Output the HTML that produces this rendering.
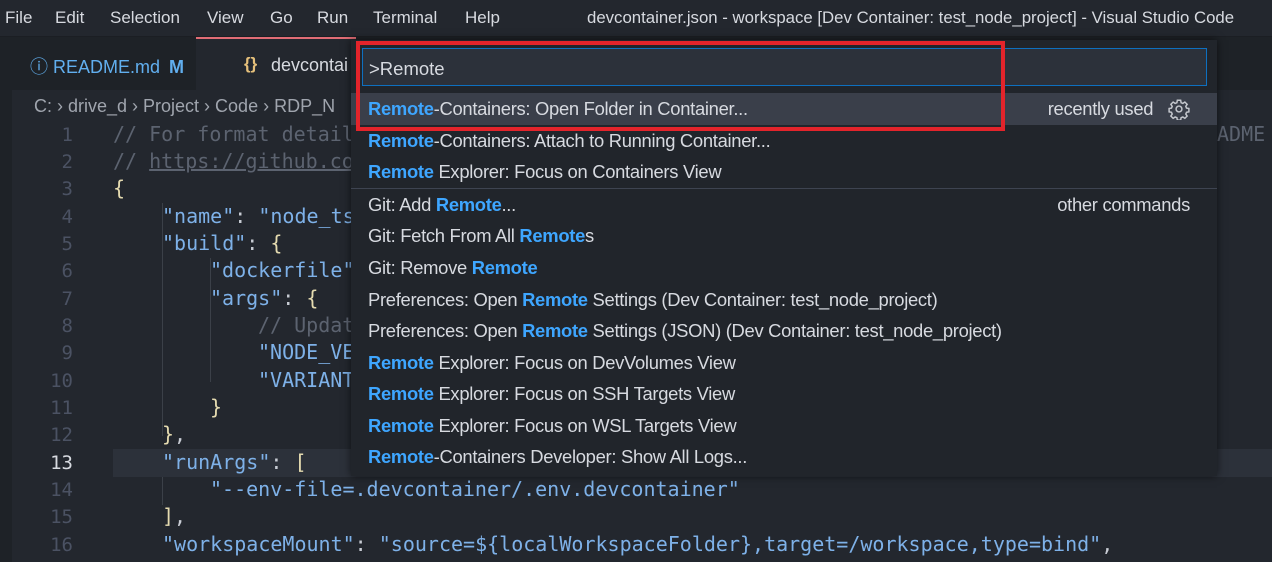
<!DOCTYPE html>
<html><head><meta charset="utf-8"><style>
*{margin:0;padding:0;box-sizing:border-box}
body{width:1272px;height:562px;overflow:hidden;background:#23272e;font-family:"Liberation Sans",sans-serif;color:#d7dae0;position:relative}
.abs{position:absolute;white-space:pre}
#menu{position:absolute;left:0;top:0;width:1272px;height:37px;background:#23272e;border-bottom:1px solid #1b1e23}
#menu span{position:absolute;top:8px;font-size:17px;color:#d7dae0}
#tabs{position:absolute;left:0;top:37px;width:1272px;height:53px;background:#1e2227}
.tab1{position:absolute;left:10px;top:37px;width:186px;height:53px;background:#1e2227}
.tab2{position:absolute;left:196px;top:37px;width:160px;height:53px;background:#23272e;border-top:2px solid #e06c75}
#gutter{position:absolute;left:0;top:90px;width:12px;height:472px;background:#1e2227}
.code{position:absolute;left:0;font-family:"DejaVu Sans Mono",monospace;font-size:20px;white-space:pre;color:#abb2bf}
.ln{position:absolute;width:73px;text-align:right;font-family:"DejaVu Sans Mono",monospace;font-size:19px;color:#4b5263}
.k{color:#7eb1e8}.p{color:#c8ccd4}.b{color:#e5dbb0}.c{color:#5c6370}
#hl13{position:absolute;left:113px;top:449px;width:1159px;height:28px;background:#2c313a}
#pal{position:absolute;left:351px;top:40px;width:866px;height:436px;background:#21252b;box-shadow:0 0 8px rgba(0,0,0,.6)}
#inp{position:absolute;left:11px;top:8px;width:845px;height:38px;background:#2c313a;border:1px solid #0e70c0;font-size:18.5px;padding:9px 0 0 6px;color:#d7dae0}
.row{position:absolute;left:0;width:866px;height:31.7px;font-size:18.4px;padding:5px 0 0 17px;color:#d7dae0;white-space:pre;letter-spacing:-0.3px}
.row b{color:#3ea6ff}
.sel{background:#3a3f4a}
.rt{position:absolute;right:27px;top:5px;color:#d7dae0}
#red{position:absolute;left:356px;top:41px;width:649px;height:90px;border:4px solid #e3242b}
.ind{position:absolute;width:1px;background:#3b4048}
</style></head><body>
<div id="menu">
<span style="left:5px">File</span><span style="left:55px">Edit</span><span style="left:110px">Selection</span><span style="left:207px">View</span><span style="left:270px">Go</span><span style="left:317px">Run</span><span style="left:373px">Terminal</span><span style="left:465px">Help</span>
<span style="left:587px;font-size:16.8px">devcontainer.json - workspace [Dev Container: test_node_project] - Visual Studio Code</span>
</div>
<div id="tabs"></div>
<div class="tab1"><span class="abs" style="left:20px;top:16px;font-size:18px;color:#61afef">ⓘ README.md <b style="margin-left:4px">M</b></span></div>
<div class="tab2"><span class="abs" style="left:48px;top:15px;font-size:17px;color:#e5c07b;font-weight:bold">{}</span><span class="abs" style="left:75px;top:16px;font-size:18px;color:#d7dae0">devcontai</span></div>
<div id="gutter"></div>
<div class="abs" style="left:34px;top:96px;font-size:18px;color:#a0a5ae">C: › drive_d › Project › Code › RDP_N</div>
<div id="hl13"></div>
<div class="ind" style="left:162px;top:203px;height:233px"></div>
<div class="ind" style="left:210px;top:258px;height:124px"></div>
<div class="ind" style="left:162px;top:477px;height:28px"></div>
<div class="ln" style="top:124px">1</div><div class="ln" style="top:151px">2</div><div class="ln" style="top:178px">3</div><div class="ln" style="top:206px">4</div><div class="ln" style="top:233px">5</div><div class="ln" style="top:260px">6</div><div class="ln" style="top:288px">7</div><div class="ln" style="top:315px">8</div><div class="ln" style="top:342px">9</div><div class="ln" style="top:370px">10</div><div class="ln" style="top:397px">11</div><div class="ln" style="top:424px">12</div><div class="ln" style="top:452px;color:#d7dae0">13</div><div class="ln" style="top:479px">14</div><div class="ln" style="top:506px">15</div><div class="ln" style="top:534px">16</div>
<div class="code" style="left:113px;top:122px"><span class="c">// For format detail</span></div>
<div class="code" style="left:113px;top:149px"><span class="c">// <u>https://github.co</u></span></div>
<div class="code" style="left:113px;top:176px"><span class="b">{</span></div>
<div class="code" style="left:162px;top:204px"><span class="k">"name"</span><span class="p">: </span><span class="k">"node_ts</span></div>
<div class="code" style="left:162px;top:231px"><span class="k">"build"</span><span class="p">: </span><span class="b">{</span></div>
<div class="code" style="left:210px;top:258px"><span class="k">"dockerfile"</span></div>
<div class="code" style="left:210px;top:286px"><span class="k">"args"</span><span class="p">: </span><span class="b">{</span></div>
<div class="code" style="left:258px;top:313px"><span class="c">// Updat</span></div>
<div class="code" style="left:258px;top:340px"><span class="k">"NODE_VE</span></div>
<div class="code" style="left:258px;top:368px"><span class="k">"VARIANT</span></div>
<div class="code" style="left:210px;top:395px"><span class="b">}</span></div>
<div class="code" style="left:162px;top:422px"><span class="b">}</span><span class="p">,</span></div>
<div class="code" style="left:162px;top:450px"><span class="k">"runArgs"</span><span class="p">: </span><span class="b">[</span></div>
<div class="code" style="left:210px;top:477px"><span class="k">"--env-file=.devcontainer/.env.devcontainer"</span></div>
<div class="code" style="left:162px;top:504px"><span class="b">]</span><span class="p">,</span></div>
<div class="code" style="left:162px;top:532px"><span class="k">"workspaceMount"</span><span class="p">: </span><span class="k">"source=${localWorkspaceFolder},target=/workspace,type=bind"</span><span class="p">,</span></div>
<div class="code" style="left:1217px;top:122px"><span class="c">ADME</span></div>
<div id="pal">
<div id="inp">&gt;Remote</div>
<div class="row sel" style="top:53px"><b>Remote</b>-Containers: Open Folder in Container...<span class="rt">recently used <svg width="22" height="22" viewBox="0 0 24 24" style="vertical-align:-5px;margin-left:10px" fill="none" stroke="#c5c8ce" stroke-width="1.6"><path d="M10.2 2.5h3.6l.5 2.6 1.9.8 2.2-1.5 2.5 2.5-1.5 2.2.8 1.9 2.6.5v3.6l-2.6.5-.8 1.9 1.5 2.2-2.5 2.5-2.2-1.5-1.9.8-.5 2.6h-3.6l-.5-2.6-1.9-.8-2.2 1.5-2.5-2.5 1.5-2.2-.8-1.9-2.6-.5v-3.6l2.6-.5.8-1.9-1.5-2.2 2.5-2.5 2.2 1.5 1.9-.8z"/><circle cx="12" cy="12" r="3.2"/></svg></span></div>
<div class="row" style="top:85px"><b>Remote</b>-Containers: Attach to Running Container...</div>
<div class="row" style="top:116px"><b>Remote</b> Explorer: Focus on Containers View</div>
<div style="position:absolute;left:0;top:148px;width:866px;height:1px;background:#3e4451"></div>
<div class="row" style="top:149px">Git: Add <b>Remote</b>...<span class="rt">other commands</span></div>
<div class="row" style="top:180px">Git: Fetch From All <b>Remote</b>s</div>
<div class="row" style="top:212px">Git: Remove <b>Remote</b></div>
<div class="row" style="top:244px">Preferences: Open <b>Remote</b> Settings (Dev Container: test_node_project)</div>
<div class="row" style="top:275px">Preferences: Open <b>Remote</b> Settings (JSON) (Dev Container: test_node_project)</div>
<div class="row" style="top:307px"><b>Remote</b> Explorer: Focus on DevVolumes View</div>
<div class="row" style="top:338px"><b>Remote</b> Explorer: Focus on SSH Targets View</div>
<div class="row" style="top:370px"><b>Remote</b> Explorer: Focus on WSL Targets View</div>
<div class="row" style="top:401px"><b>Remote</b>-Containers Developer: Show All Logs...</div>
</div>
<div id="red"></div>
</body></html>
